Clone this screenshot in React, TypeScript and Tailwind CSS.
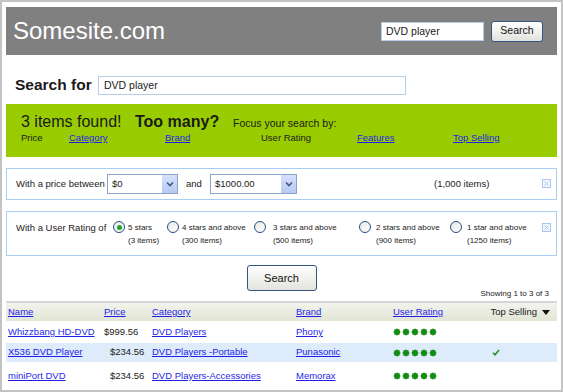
import React from 'react';

type Row = {
  name: string;
  price: string;
  pricePad: string;
  category: string;
  brand: string;
  top: boolean;
  height: string;
  bg: string;
};

const rows: Row[] = [
  { name: 'Whizzbang HD-DVD', price: '$999.56', pricePad: 'pl-0', category: 'DVD Players ', brand: 'Phony', top: false, height: 'h-[22px]', bg: '' },
  { name: 'X536 DVD Player', price: '$234.56', pricePad: 'pl-[6px]', category: 'DVD Players -Portable', brand: 'Punasonic', top: true, height: 'h-[19px]', bg: 'bg-[#ddebfb]' },
  { name: 'miniPort DVD ', price: '$234.56', pricePad: 'pl-[6px]', category: 'DVD Players-Accessories ', brand: 'Memorax', top: false, height: 'h-[28px]', bg: '' },
];

const ratings = [
  { label: '5 stars', count: '(3 items)', width: 'w-[54px]', pad: 'pl-0', checked: true },
  { label: '4 stars and above', count: '(300 items)', width: 'w-[87px]', pad: 'pl-0', checked: false },
  { label: '3 stars and above', count: '(500 items)', width: 'w-[105px]', pad: 'pl-[4px]', checked: false },
  { label: '2 stars and above', count: '(900 items)', width: 'w-[91px]', pad: 'pl-[2px]', checked: false },
  { label: '1 star and above', count: '(1250 items)', width: 'w-[80px]', pad: 'pl-[2px]', checked: false },
];

function Star() {
  return (
    <svg width="8" height="8" viewBox="0 0 8 8">
      <polygon
        points="4,0 4.9,1.8 6.8,1.2 6.2,3.1 8,4 6.2,4.9 6.8,6.8 4.9,6.2 4,8 3.1,6.2 1.2,6.8 1.8,4.9 0,4 1.8,3.1 1.2,1.2 3.1,1.8"
        fill="#138c13"
      />
      <circle cx="4" cy="4" r="2.9" fill="#138c13" />
    </svg>
  );
}

function Select({ value, width }: { value: string; width: string }) {
  return (
    <div className={`${width} h-[20px] border border-[#8aa4c8] bg-white flex items-stretch`}>
      <div className="flex-1 pl-[4px] text-[9.5px] leading-[17px] text-[#222]">{value}</div>
      <div className="w-[15px] bg-gradient-to-b from-[#d6e1fb] to-[#b7c8f2] flex items-center justify-center">
        <svg width="8" height="6" viewBox="0 0 8 6">
          <path d="M1 1.5 L4 4.5 L7 1.5" fill="none" stroke="#3f5a8a" strokeWidth="1.6" />
        </svg>
      </div>
    </div>
  );
}

function CloseBox() {
  return (
    <svg width="9" height="9" viewBox="0 0 9 9">
      <rect x="0.5" y="0.5" width="8" height="8" fill="#f3f8ff" stroke="#a9c8ee" />
      <path d="M2.5 2.5 L6.5 6.5 M6.5 2.5 L2.5 6.5" stroke="#a9c8ee" strokeWidth="1" />
    </svg>
  );
}

function Radio({ checked }: { checked: boolean }) {
  return (
    <div className="w-[12px] h-[12px] rounded-full border border-[#244f7d] bg-gradient-to-br from-[#e8e8e8] to-white flex items-center justify-center shrink-0">
      {checked && <div className="w-[5px] h-[5px] rounded-full bg-[#22a022]" />}
    </div>
  );
}

export default function App() {
  const link = 'text-[#1f1fe8] underline';
  return (
    <div className="w-[563px] h-[392px] border-2 border-[#c3c3c3] bg-white px-[4px] pt-[5px] font-['Liberation_Sans',Arial,sans-serif] text-[#1a1a1a] overflow-hidden">
      {/* header */}
      <div className="h-[48px] bg-[#808080] flex items-center justify-between pl-[7px] pr-[14px]">
        <div className="text-[24px] text-white leading-none">Somesite.com</div>
        <div className="flex items-center gap-[7px]">
          <div className="w-[103px] h-[19px] border border-[#b5cde6] bg-white pl-[4px] text-[10.5px] leading-[17px]">DVD player</div>
          <button className="w-[52px] h-[21px] rounded-[3px] border border-[#33557f] bg-gradient-to-b from-white to-[#e2e2dc] text-[10.5px] text-[#111]">Search</button>
        </div>
      </div>

      {/* search for */}
      <div className="mt-[21px] h-[18px] flex items-center pl-[9px]">
        <div className="text-[15.5px] font-bold w-[83px]">Search for</div>
        <div className="w-[308px] h-[19px] border border-[#b5cde6] bg-white pl-[5px] text-[10.5px] leading-[17px]">DVD player</div>
      </div>

      {/* green bar */}
      <div className="mt-[10px] h-[53px] bg-[#99cc00] pl-[15px]">
        <div className="flex items-baseline pt-[6px] h-[28px]">
          <span className="text-[16px] w-[114px]">3 items found!</span>
          <span className="text-[16px] font-bold w-[98px]">Too many?</span>
          <span className="text-[10.5px]">Focus your search by:</span>
        </div>
        <div className="grid grid-cols-[48px_96px_96px_96px_96px_96px] text-[9.5px] leading-[12px]">
          <span>Price</span>
          <span className={link}>Category </span>
          <span className={link}>Brand </span>
          <span>User Rating</span>
          <span className={link}>Features </span>
          <span className={link}>Top Selling </span>
        </div>
      </div>

      {/* price filter */}
      <div className="mt-[11px] h-[32px] border border-[#a9cdf3] flex items-center pl-[9px] pr-[5px] text-[9.5px]">
        <span className="w-[91px]">With a price between</span>
        <Select value="$0" width="w-[71px]" />
        <span className="w-[32px] pl-[8px]">and</span>
        <Select value="$1000.00" width="w-[87px]" />
        <span className="ml-[137px]">(1,000 items)</span>
        <div className="ml-auto pb-[2px]">
          <CloseBox />
        </div>
      </div>

      {/* rating filter */}
      <div className="mt-[11px] h-[45px] border border-[#a9cdf3] flex items-start pl-[9px] pr-[5px] pt-[9px] text-[9.5px]">
        <span className="w-[97px] leading-[14px]">With a User Rating of</span>
        {ratings.map((r) => (
          <div key={r.label} className={`${r.width} flex items-start gap-[3px]`}>
            <Radio checked={r.checked} />
            <div className={`text-[8px] leading-[13px] ${r.pad}`}>
              <div>{r.label}</div>
              <div>{r.count}</div>
            </div>
          </div>
        ))}
        <div className="ml-auto pt-[2px]">
          <CloseBox />
        </div>
      </div>

      {/* search button + count */}
      <div className="mt-[9px] grid grid-cols-[1fr_auto_1fr] h-[33px]">
        <div />
        <button className="w-[70px] h-[26px] rounded-[3px] border border-[#33557f] bg-gradient-to-b from-white to-[#e4e4de] text-[11px] text-[#111]">Search</button>
        <div className="self-end justify-self-end pr-[8px] text-[8px] leading-[9px]">Showing 1 to 3 of 3</div>
      </div>

      {/* table */}
      <div className="mt-[3px] border-t-2 border-[#d6d6d6]">
        <div className="h-[18px] grid grid-cols-[96px_48px_144px_97px_95px_1fr] items-center pl-[2px] pr-[7px] bg-gradient-to-b from-[#f2f3ec] to-[#e2e6d5] text-[9.5px]">
          <span className={link}>Name </span>
          <span className={link}>Price </span>
          <span className={link}>Category</span>
          <span className={link}>Brand </span>
          <span className={link}>User Rating</span>
          <span className="flex items-center justify-end gap-[5px]">
            Top Selling
            <svg width="8" height="5" viewBox="0 0 8 5">
              <polygon points="0,0 8,0 4,5" fill="#111" />
            </svg>
          </span>
        </div>
        {rows.map((r) => (
          <div key={r.name} className={`${r.height} ${r.bg} grid grid-cols-[96px_48px_144px_97px_95px_1fr] items-center pl-[2px] pr-[4px] text-[9.5px]`}>
            <span className={link}>{r.name}</span>
            <span className={r.pricePad}>{r.price}</span>
            <span className={link}>{r.category}</span>
            <span className={link}>{r.brand}</span>
            <span className="flex gap-[1px]">
              <Star />
              <Star />
              <Star />
              <Star />
              <Star />
            </span>
            <span className="pl-[4px]">
              {r.top && (
                <svg width="8" height="7" viewBox="0 0 8 7">
                  <path d="M1 3.8 L3 5.8 L7 1" fill="none" stroke="#2a8a2a" strokeWidth="1.6" />
                </svg>
              )}
            </span>
          </div>
        ))}
      </div>
    </div>
  );
}
